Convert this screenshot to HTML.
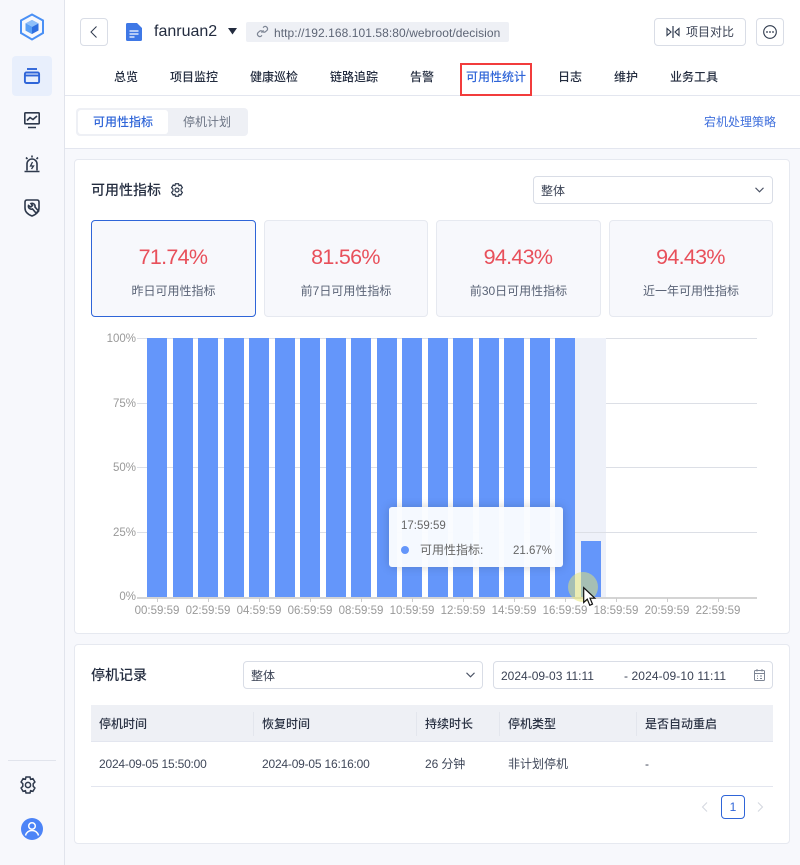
<!DOCTYPE html>
<html lang="zh"><head><meta charset="utf-8"><style>
html,body{margin:0;padding:0}
body{width:800px;height:865px;position:relative;overflow:hidden;background:#f7f8fc;font-family:"Liberation Sans","Noto Sans CJK SC",sans-serif;font-size:12px;color:#2a3244}
.a{position:absolute;white-space:nowrap}
.box{position:absolute;box-sizing:border-box}
.nav{position:absolute;top:68px;line-height:18px;font-size:12px;font-weight:500;color:#232c3f;white-space:nowrap}
.card{position:absolute;box-sizing:border-box;top:220px;height:97px;background:#f7f8fc;border:1px solid #e6e9f0;border-radius:4px;text-align:center}
.card .v{position:absolute;left:0;right:1px;top:21px;line-height:30px;font-size:21.5px;letter-spacing:-.7px;color:#e8505b}
.card .t{position:absolute;left:0;right:0;top:61px;line-height:18px;font-size:12px;color:#5a6376}
.y{position:absolute;right:664px;font-size:11.5px;line-height:14px;color:#999}
.x{position:absolute;top:604px;width:60px;text-align:center;font-size:11.5px;line-height:14px;color:#999}
.gl{position:absolute;left:137px;width:620px;height:1px;background:#dcdfe6}
.bar{position:absolute;width:20px;background:#6496fa}
.tk{position:absolute;top:598px;width:1px;height:4px;background:#ccc}
.th{position:absolute;top:715px;line-height:18px;font-weight:500;color:#2a3244;white-space:nowrap}
.td{position:absolute;top:755px;line-height:18px;color:#3f4759;white-space:nowrap}
.sep{position:absolute;top:712px;width:1px;height:24px;background:#e3e6ed}
svg{position:absolute;overflow:visible}
</style></head><body>

<!-- sidebar -->
<div class="box" style="left:0;top:0;width:65px;height:865px;background:#f7f8fc;border-right:1px solid #e1e4ec"></div>
<svg style="left:19px;top:13px" width="26" height="28" viewBox="0 0 26 28" fill="none"><path d="M13 1.500 24 7.500V20L13 26.500 2 20V7.500Z" stroke="#4a90f5" stroke-width="2"/><path d="M13 7 19.500 10.500V17.500L13 21 6.500 17.500V10.500Z" fill="#2f6fe0"/><path d="M13 7 19.500 10.500 13 14 6.500 10.500Z" fill="#8fc0fa"/><path d="M13 14V21L6.500 17.500V10.500Z" fill="#5aa0f5"/></svg>
<div class="box" style="left:12px;top:56px;width:40px;height:40px;background:#e8effc;border-radius:4px"></div>
<svg style="left:24px;top:68px" width="16" height="16" viewBox="0 0 16 16" fill="none" stroke="#2f65d8" stroke-width="1.900"><path d="M3 1h10"/><rect x="0.900" y="4.500" width="14.200" height="10.500" rx="1.500"/><path d="M1 7.500h14"/></svg>
<svg style="left:24px;top:112px" width="16" height="17" viewBox="0 0 16 17" fill="none" stroke="#2e394c" stroke-width="1.600"><rect x="0.800" y="0.800" width="14.400" height="11" rx="0.800"/><path d="M3 8.500 6 5.500 9 7.500 13 4M4 15.500h8"/></svg>
<svg style="left:24px;top:155px" width="16" height="18" viewBox="0 0 16 18" fill="none" stroke="#2e394c" stroke-width="1.600"><path d="M3 15.500V9a5 5 0 0 1 10 0v6.500M0.500 16.500h15M8 0.500v2M2 2.500l1.500 1.500M14 2.500l-1.500 1.500"/><path d="M8.500 7 6.500 11h3L7.500 14" stroke-width="1.300"/></svg>
<svg style="left:24px;top:199px" width="16" height="18" viewBox="0 0 16 18" fill="none" stroke="#2e394c" stroke-width="1.600"><path d="M3 1H13Q15 1 15 3V9c0 4-3 6.500-7 8C4 15.500 1 13 1 9V3Q1 1 3 1Z"/><path d="M4.500 6.500a3 3 0 0 0 4 3.500l3.500 4 2.500-2-3.500-4A3 3 0 0 0 7 4.500L8.500 6.500 6.800 8Z"/></svg>
<div class="box" style="left:8px;top:760px;width:48px;height:1px;background:#e1e4ec"></div>
<svg style="left:19px;top:776px" width="18" height="18" viewBox="0 0 18 18" fill="none" stroke="#2e394c" stroke-width="1.500"><path d="M7 1h4l.6 2.300 2.300-.7 2 3.400-1.700 1.700v2.600l1.700 1.700-2 3.400-2.300-.7L11 17H7l-.6-2.300-2.300.7-2-3.400 1.700-1.700V7.700L2.100 6l2-3.400 2.300.7Z"/><circle cx="9" cy="9" r="2.600"/></svg>
<svg style="left:21px;top:818px" width="22" height="22" viewBox="0 0 22 22" fill="none"><circle cx="11" cy="11" r="11" fill="#4c84f7"/><circle cx="11" cy="8" r="3.300" stroke="#fff" stroke-width="1.500"/><path d="M4.500 17.500c1-3.500 3.500-5 6.500-5s5.500 1.500 6.500 5" stroke="#fff" stroke-width="1.500"/></svg>

<!-- header -->
<div class="box" style="left:65px;top:0;width:735px;height:96px;background:#fff;border-bottom:1px solid #e3e6ef"></div>
<div class="box" style="left:80px;top:18px;width:28px;height:28px;border:1px solid #d9dde6;border-radius:4px;background:#fff"></div>
<svg style="left:90px;top:26px" width="8" height="12" viewBox="0 0 8 12" fill="none" stroke="#2e394c" stroke-width="1"><path d="M6.500 .5 1 6l5.500 5.500"/></svg>
<svg style="left:126px;top:23px" width="16" height="18" viewBox="0 0 16 18"><path d="M1.500 0H11L16 5V16.500A1.500 1.500 0 0 1 14.500 18H1.500A1.500 1.500 0 0 1 0 16.500V1.500A1.500 1.500 0 0 1 1.500 0Z" fill="#3f78e6"/><path d="M3.500 8h9M3.500 11h9M3.500 14h5" stroke="#fff" stroke-width="1.300"/></svg>
<div class="a" style="left:154px;top:22px;font-size:16px;line-height:20px;color:#232c3f">fanruan2</div>
<svg style="left:228px;top:28px" width="9" height="7" viewBox="0 0 9 7"><path d="M0 0h9L4.500 6.500Z" fill="#232c3f"/></svg>
<div class="box" style="left:246px;top:22px;width:263px;height:20px;background:#eef0f5;border-radius:2px"></div>
<svg style="left:256px;top:25px" width="13" height="13" viewBox="0 0 12 12" fill="none" stroke="#7d8594" stroke-width="1.100"><path d="M5 7l2-2M6.500 2.500l1-1a2.300 2.300 0 0 1 3 3l-1.500 1.500a2.300 2.300 0 0 1-3 0M5.500 9.500l-1 1a2.300 2.300 0 0 1-3-3L3 6a2.300 2.300 0 0 1 3 0"/></svg>
<div class="a" style="left:274px;top:25px;font-size:12px;line-height:16px;letter-spacing:.07px;color:#5d6575">http://192.168.101.58:80/webroot/decision</div>
<div class="box" style="left:654px;top:18px;width:92px;height:28px;border:1px solid #d9dde6;border-radius:4px;background:#fff"></div>
<svg style="left:666px;top:26px" width="14" height="12" viewBox="0 0 14 12" fill="none" stroke="#2e394c" stroke-width="1.100"><path d="M7 0v12" stroke="#555f70" stroke-width="1.500"/><path d="M1 2.500v7L5 6ZM13 2.500v7L9 6Z"/></svg>
<div class="a" style="left:686px;top:23px;line-height:18px;color:#3a4254">项目对比</div>
<div class="box" style="left:756px;top:18px;width:28px;height:28px;border:1px solid #d9dde6;border-radius:4px;background:#fff"></div>
<svg style="left:763px;top:25px" width="14" height="14" viewBox="0 0 14 14" fill="none"><circle cx="7" cy="7" r="6.300" stroke="#2e394c" stroke-width="1.100"/><circle cx="4" cy="7" r=".9" fill="#2e394c"/><circle cx="7" cy="7" r=".9" fill="#2e394c"/><circle cx="10" cy="7" r=".9" fill="#2e394c"/></svg>

<div class="nav" style="left:114px">总览</div>
<div class="nav" style="left:170px">项目监控</div>
<div class="nav" style="left:250px">健康巡检</div>
<div class="nav" style="left:330px">链路追踪</div>
<div class="nav" style="left:410px">告警</div>
<div class="nav" style="left:466px;color:#2f65d8">可用性统计</div>
<div class="box" style="left:460px;top:63px;width:72px;height:33px;border:2px solid #f23c3c"></div>
<div class="nav" style="left:558px">日志</div>
<div class="nav" style="left:614px">维护</div>
<div class="nav" style="left:670px">业务工具</div>

<!-- sub bar -->
<div class="box" style="left:65px;top:96px;width:735px;height:53px;background:#fff;border-bottom:1px solid #e3e6ef"></div>
<div class="box" style="left:76px;top:108px;width:172px;height:28px;background:#eef0f5;border-radius:4px"></div>
<div class="box" style="left:78px;top:110px;width:90px;height:24px;background:#fff;border-radius:3px"></div>
<div class="a" style="left:93px;top:114px;line-height:16px;font-weight:500;color:#2f65d8">可用性指标</div>
<div class="a" style="left:183px;top:114px;line-height:16px;color:#6c7484">停机计划</div>
<div class="a" style="left:704px;top:114px;line-height:16px;color:#3f6fdc">宕机处理策略</div>

<!-- main card -->
<div class="box" style="left:74px;top:159px;width:716px;height:475px;background:#fff;border:1px solid #e6e9f0;border-radius:4px"></div>
<div class="a" style="left:91px;top:181px;line-height:18px;font-weight:500;color:#232c3f;font-size:14px">可用性指标</div>
<svg style="left:170px;top:183px" width="14" height="14" viewBox="0 0 18 18" fill="none" stroke="#2e394c" stroke-width="1.600"><path d="M7 1h4l.6 2.300 2.300-.7 2 3.400-1.700 1.700v2.600l1.700 1.700-2 3.400-2.300-.7L11 17H7l-.6-2.300-2.300.7-2-3.400 1.700-1.700V7.700L2.100 6l2-3.400 2.300.7Z"/><circle cx="9" cy="9" r="2.600"/></svg>
<div class="box" style="left:533px;top:176px;width:240px;height:28px;border:1px solid #d9dde6;border-radius:4px;background:#fff"></div>
<div class="a" style="left:541px;top:183px;line-height:16px;color:#3a4254">整体</div>
<svg style="left:755px;top:187px" width="9" height="6" viewBox="0 0 9 6" fill="none" stroke="#4a5264" stroke-width="1.100"><path d="M.5 .8 4.500 4.800 8.500 .8"/></svg>

<div class="card" style="left:91px;width:165px;border-color:#2f65d8"><div class="v">71.74%</div><div class="t">昨日可用性指标</div></div>
<div class="card" style="left:264px;width:164px"><div class="v">81.56%</div><div class="t">前7日可用性指标</div></div>
<div class="card" style="left:436px;width:165px"><div class="v">94.43%</div><div class="t">前30日可用性指标</div></div>
<div class="card" style="left:609px;width:164px"><div class="v">94.43%</div><div class="t">近一年可用性指标</div></div>

<!-- chart -->
<div class="y" style="top:332px">100%</div>
<div class="y" style="top:397px">75%</div>
<div class="y" style="top:461px">50%</div>
<div class="y" style="top:526px">25%</div>
<div class="y" style="top:590px">0%</div>
<div class="gl" style="top:338px"></div>
<div class="gl" style="top:403px"></div>
<div class="gl" style="top:467px"></div>
<div class="gl" style="top:532px"></div>
<div class="box" style="left:575px;top:338px;width:31px;height:259px;background:#eef1f9"></div>
<div class="gl" style="top:532px;left:575px;width:182px"></div>
<div class="bar" style="left:147px;top:338px;height:259px"></div>
<div class="bar" style="left:172.500px;top:338px;height:259px"></div>
<div class="bar" style="left:198px;top:338px;height:259px"></div>
<div class="bar" style="left:223.500px;top:338px;height:259px"></div>
<div class="bar" style="left:249px;top:338px;height:259px"></div>
<div class="bar" style="left:274.500px;top:338px;height:259px"></div>
<div class="bar" style="left:300px;top:338px;height:259px"></div>
<div class="bar" style="left:325.500px;top:338px;height:259px"></div>
<div class="bar" style="left:351px;top:338px;height:259px"></div>
<div class="bar" style="left:376.500px;top:338px;height:259px"></div>
<div class="bar" style="left:402px;top:338px;height:259px"></div>
<div class="bar" style="left:427.500px;top:338px;height:259px"></div>
<div class="bar" style="left:453px;top:338px;height:259px"></div>
<div class="bar" style="left:478.500px;top:338px;height:259px"></div>
<div class="bar" style="left:504px;top:338px;height:259px"></div>
<div class="bar" style="left:529.500px;top:338px;height:259px"></div>
<div class="bar" style="left:555px;top:338px;height:259px"></div>
<div class="bar" style="left:580.500px;top:541px;height:56px"></div>
<div class="box" style="left:137px;top:597px;width:620px;height:2px;background:#d4d4d4"></div>
<div class="tk" style="left:157px"></div>
<div class="tk" style="left:208px"></div>
<div class="tk" style="left:259px"></div>
<div class="tk" style="left:310px"></div>
<div class="tk" style="left:361px"></div>
<div class="tk" style="left:412px"></div>
<div class="tk" style="left:463px"></div>
<div class="tk" style="left:514px"></div>
<div class="tk" style="left:565px"></div>
<div class="tk" style="left:616px"></div>
<div class="tk" style="left:667px"></div>
<div class="tk" style="left:718px"></div>
<div class="x" style="left:127px">00:59:59</div>
<div class="x" style="left:178px">02:59:59</div>
<div class="x" style="left:229px">04:59:59</div>
<div class="x" style="left:280px">06:59:59</div>
<div class="x" style="left:331px">08:59:59</div>
<div class="x" style="left:382px">10:59:59</div>
<div class="x" style="left:433px">12:59:59</div>
<div class="x" style="left:484px">14:59:59</div>
<div class="x" style="left:535px">16:59:59</div>
<div class="x" style="left:586px">18:59:59</div>
<div class="x" style="left:637px">20:59:59</div>
<div class="x" style="left:688px">22:59:59</div>

<div class="box" style="left:389px;top:507px;width:174px;height:60px;background:rgba(250,252,255,.97);border-radius:3px;box-shadow:0 0 10px rgba(0,0,0,.18)"></div>
<div class="a" style="left:401px;top:519px;line-height:14px;font-size:11.500px;color:#666">17:59:59</div>
<div class="box" style="left:401px;top:546px;width:8px;height:8px;border-radius:50%;background:#6496fa"></div>
<div class="a" style="left:420px;top:542px;line-height:16px;color:#666">可用性指标:</div>
<div class="a" style="left:513px;top:543px;line-height:16px;font-size:11.500px;color:#666">21.67%</div>

<div class="box" style="left:568px;top:572px;width:30px;height:30px;border-radius:50%;background:rgba(232,232,110,.5)"></div>
<svg style="left:583px;top:587px" width="13" height="20" viewBox="0 0 13 20"><path d="M.7 .7V15.500L4.300 12.200 6.800 18.300 9.500 17.100 7 11.200H11.800Z" fill="#fff" stroke="#111" stroke-width="1.200"/></svg>

<!-- lower card -->
<div class="box" style="left:74px;top:644px;width:716px;height:200px;background:#fff;border:1px solid #e6e9f0;border-radius:4px"></div>
<div class="a" style="left:91px;top:666px;font-size:14px;line-height:18px;font-weight:500;color:#232c3f">停机记录</div>
<div class="box" style="left:243px;top:661px;width:240px;height:28px;border:1px solid #d9dde6;border-radius:4px;background:#fff"></div>
<div class="a" style="left:251px;top:668px;line-height:16px;color:#3a4254">整体</div>
<svg style="left:466px;top:672px" width="9" height="6" viewBox="0 0 9 6" fill="none" stroke="#4a5264" stroke-width="1.100"><path d="M.5 .8 4.500 4.800 8.500 .8"/></svg>
<div class="box" style="left:493px;top:661px;width:280px;height:28px;border:1px solid #d9dde6;border-radius:4px;background:#fff"></div>
<div class="a" style="left:501px;top:668px;line-height:16px;color:#3a4254">2024-09-03 11:11</div>
<div class="a" style="left:624px;top:668px;line-height:16px;letter-spacing:.1px;color:#3a4254">- 2024-09-10 11:11</div>
<svg style="left:754px;top:669px" width="11" height="12" viewBox="0 0 11 12" fill="none" stroke="#7d8594"><rect x=".5" y="1.500" width="10" height="10" rx="1"/><path d="M.5 4.500h10M3 0v2.500M8 0v2.500M3 7h1M6 7h2M3 9.500h1M6 9.500h2"/></svg>

<div class="box" style="left:91px;top:705px;width:682px;height:37px;background:#eef0f5;border-bottom:1px solid #e3e6ef"></div>
<div class="sep" style="left:253px"></div>
<div class="sep" style="left:416px"></div>
<div class="sep" style="left:499px"></div>
<div class="sep" style="left:636px"></div>
<div class="th" style="left:99px">停机时间</div>
<div class="th" style="left:262px">恢复时间</div>
<div class="th" style="left:425px">持续时长</div>
<div class="th" style="left:508px">停机类型</div>
<div class="th" style="left:645px">是否自动重启</div>
<div class="td" style="left:99px;letter-spacing:-.2px">2024-09-05 15:50:00</div>
<div class="td" style="left:262px;letter-spacing:-.2px">2024-09-05 16:16:00</div>
<div class="td" style="left:425px;letter-spacing:-.1px">26 分钟</div>
<div class="td" style="left:508px">非计划停机</div>
<div class="td" style="left:645px">-</div>
<div class="box" style="left:91px;top:786px;width:682px;height:1px;background:#e3e6ef"></div>
<svg style="left:701px;top:802px" width="7" height="10" viewBox="0 0 7 10" fill="none" stroke="#d3d7df" stroke-width="1"><path d="M6 .5 1.500 5 6 9.500"/></svg>
<div class="box" style="left:721px;top:795px;width:24px;height:24px;border:1px solid #2f65d8;border-radius:4px;text-align:center;line-height:22px;color:#2f65d8;font-size:12px;background:#fff">1</div>
<svg style="left:757px;top:802px" width="7" height="10" viewBox="0 0 7 10" fill="none" stroke="#d3d7df" stroke-width="1"><path d="M1 .5 5.500 5 1 9.500"/></svg>
</body></html>
